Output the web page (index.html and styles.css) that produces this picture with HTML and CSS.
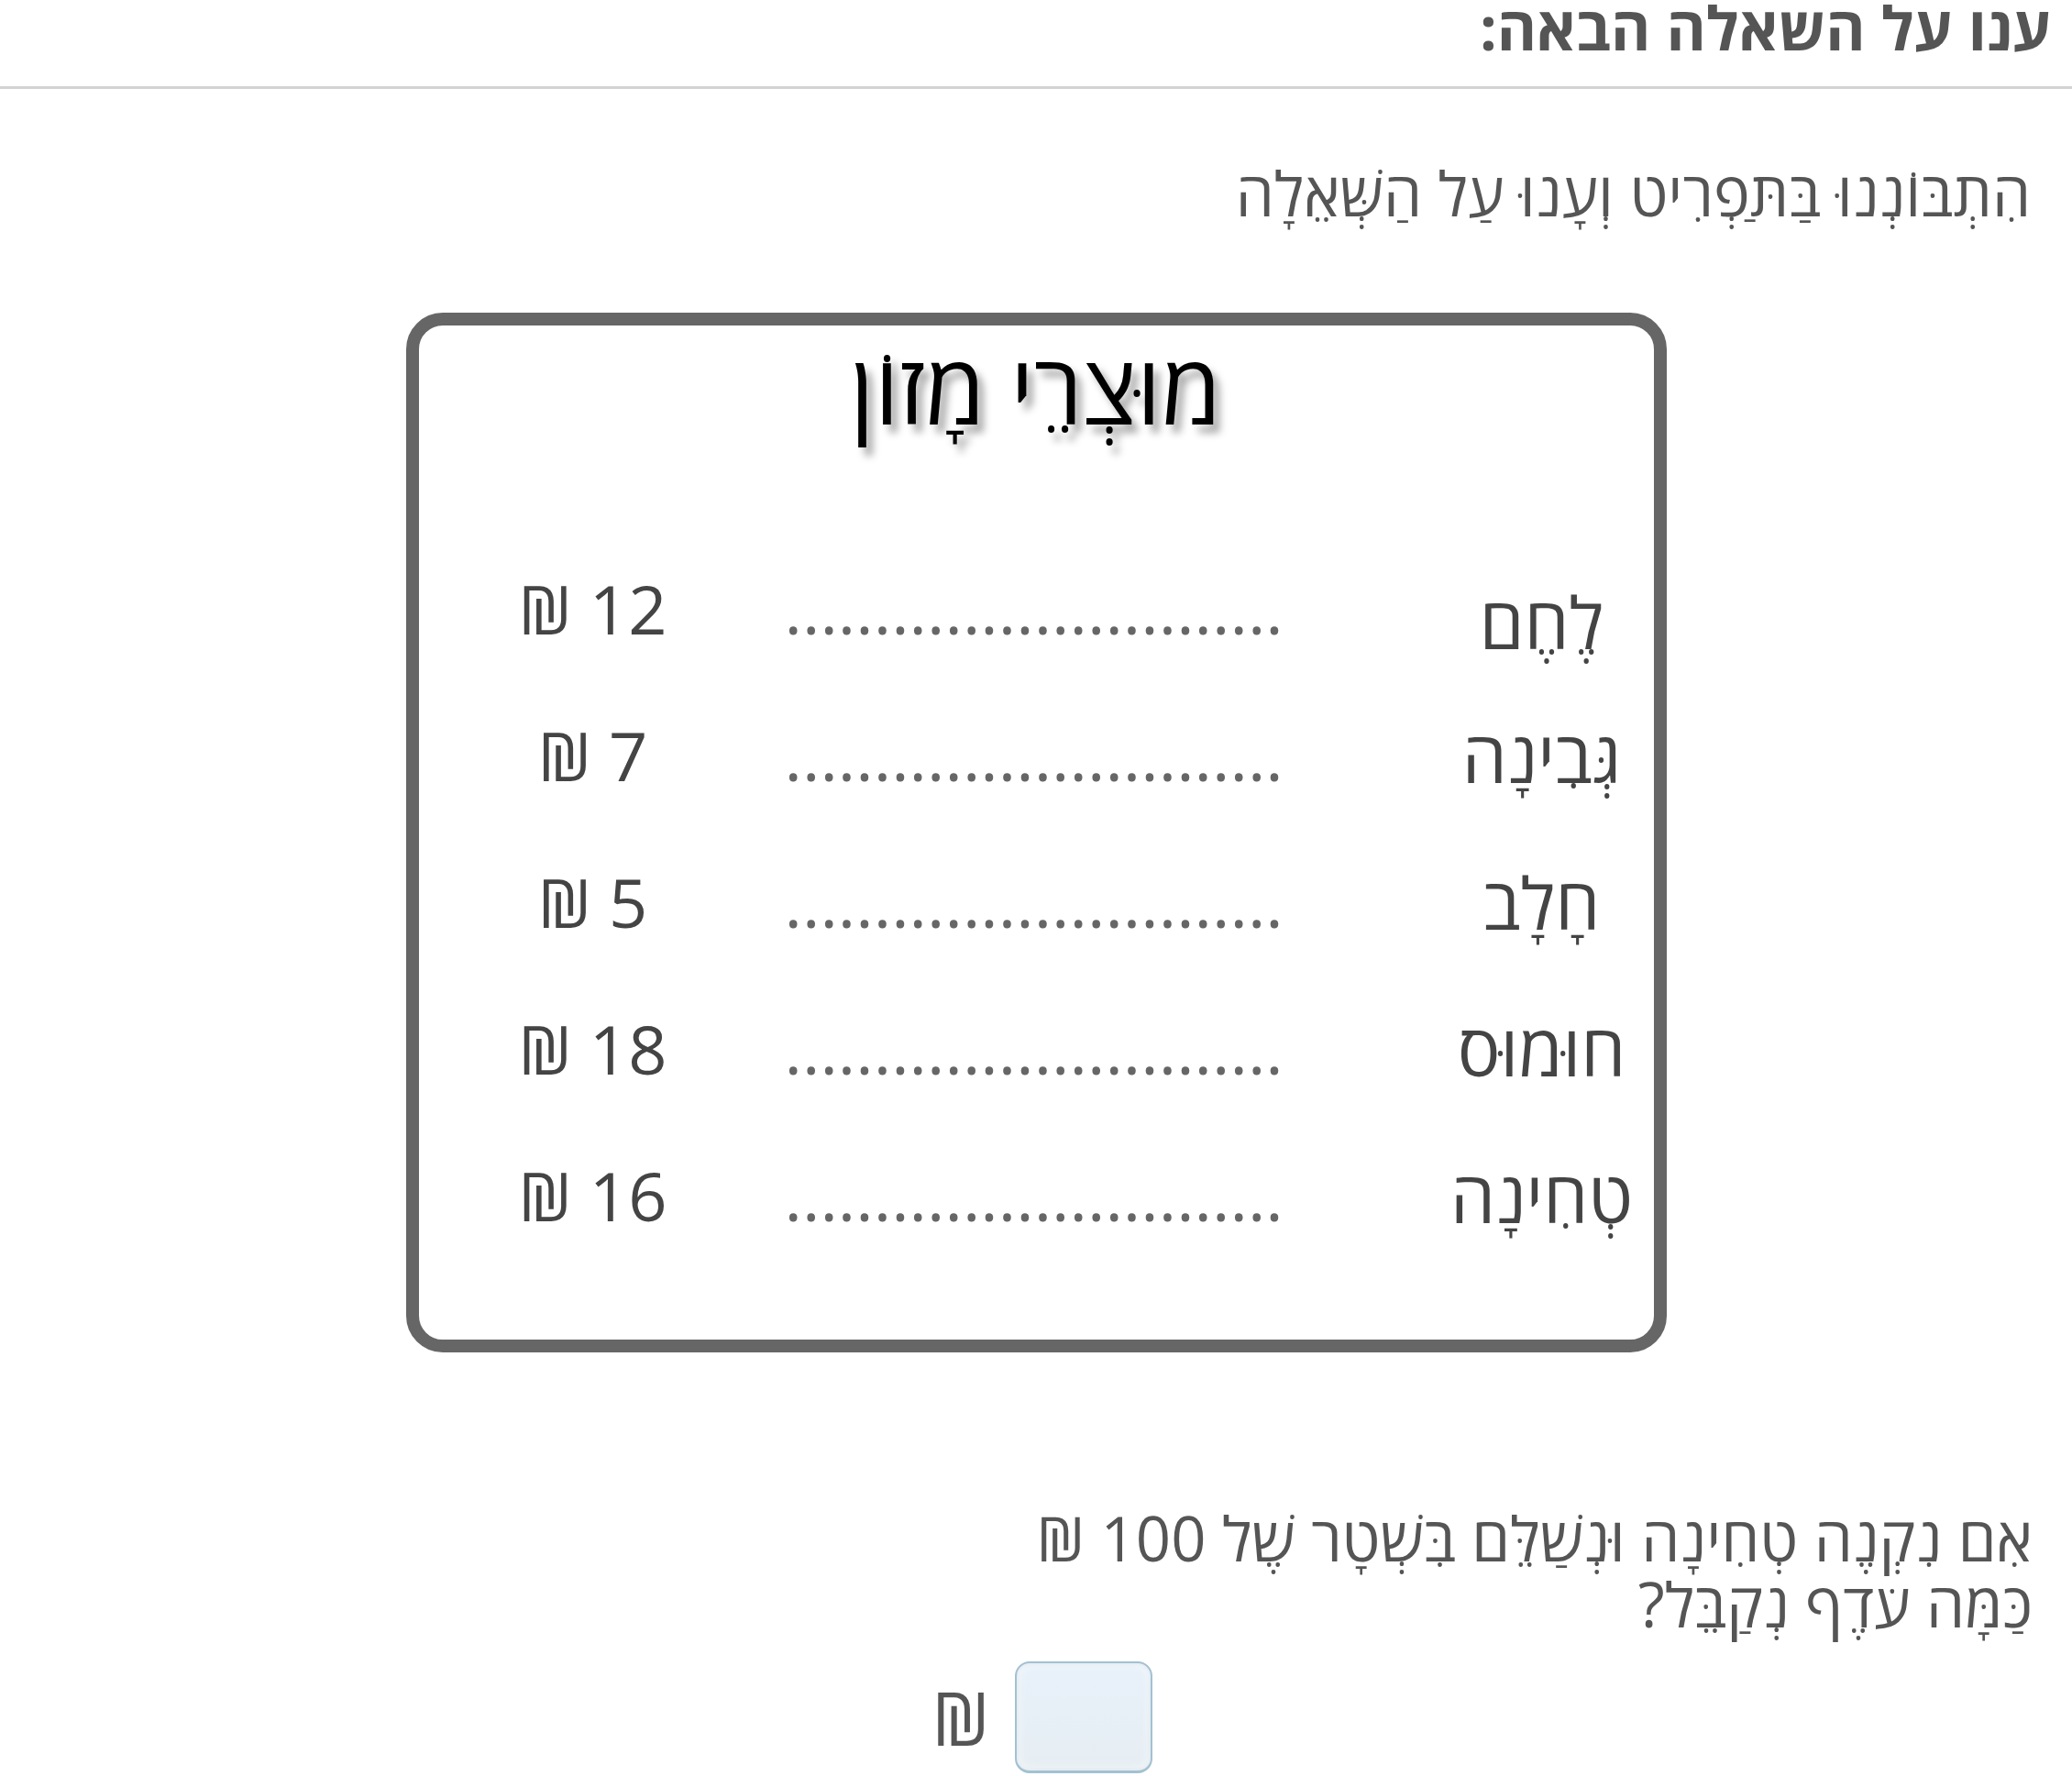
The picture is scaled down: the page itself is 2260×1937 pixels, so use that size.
FILE: index.html
```html
<!DOCTYPE html>
<html lang="he" dir="rtl">
<head>
<meta charset="utf-8">
<title>ענו על השאלה הבאה</title>
<link rel="stylesheet" href="styles.css">
</head>
<body>
<header class="page-head">ענו על השאלה הבאה:</header>
<p class="intro">הִתְבּוֹנְנוּ בַּתַּפְרִיט וְעָנוּ עַל הַשְּׁאֵלָה</p>
<section class="menu">
  <h2 class="menu-title">מוּצְרֵי מָזוֹן</h2>
  <div class="menu-list">
    <div class="item-name item-name-low">לֶחֶם</div>
    <div class="item-dots">............................</div>
    <div class="item-price">12 ₪</div>

    <div class="item-name">גְּבִינָה</div>
    <div class="item-dots">............................</div>
    <div class="item-price">7 ₪</div>

    <div class="item-name">חָלָב</div>
    <div class="item-dots">............................</div>
    <div class="item-price">5 ₪</div>

    <div class="item-name">חוּמוּס</div>
    <div class="item-dots">............................</div>
    <div class="item-price">18 ₪</div>

    <div class="item-name">טְחִינָה</div>
    <div class="item-dots">............................</div>
    <div class="item-price">16 ₪</div>
  </div>
</section>
<p class="question">אִם נִקְנֶה טְחִינָה וּנְשַׁלֵּם בִּשְׁטָר שֶׁל 100 ₪<br>כַּמָּה עֹדֶף נְקַבֵּל?</p>
<div class="answer">
  <div class="answer-box"></div>
  <span class="answer-unit">₪</span>
</div>
</body>
</html>
```
FILE: styles.css
```css
html, body {
  margin: 0;
  padding: 0;
  background: #fff;
}
body {
  direction: rtl;
  font-family: "Open Sans", "DejaVu Sans", sans-serif;
  color: #555;
  overflow: hidden;
}
.page-head {
  font-size: 66px;
  line-height: 68px;
  font-weight: 700;
  color: #555;
  margin-top: -5px;
  padding: 0 23px 31px 0;
  border-bottom: 3px solid #d3d3d3;
}
.intro {
  margin: 73px 0 0 0;
  padding-right: 45px;
  font-size: 67px;
  line-height: 80px;
}
.menu {
  width: 1375px;
  height: 1134px;
  box-sizing: border-box;
  margin: 91px auto 0 auto;
  border: 14px solid #666;
  border-radius: 40px;
  padding-top: 12px;
}
.menu-title {
  margin: 0;
  text-align: center;
  font-size: 106px;
  line-height: 110px;
  font-weight: 400;
  color: #000;
  text-shadow: 7px 9px 9px rgba(0, 0, 0, 0.35);
}
.menu-list {
  margin-top: 107px;
  display: grid;
  grid-template-columns: 236px 1fr 380px;
  grid-auto-rows: 160px;
  padding-right: 4px;
  font-size: 74px;
  line-height: 160px;
  color: #444;
}
.item-name {
  text-align: center;
  font-size: 78px;
}
.item-name-low {
  padding-top: 14px;
}
.item-dots {
  text-align: left;
  padding-left: 19px;
  color: #666;
}
.item-price {
  text-align: center;
}
.question {
  margin: 166px 0 0 0;
  padding-right: 43px;
  font-size: 67px;
  line-height: 72px;
}
.answer {
  margin-top: 27px;
  display: flex;
  justify-content: center;
  align-items: center;
  gap: 28px;
  margin-left: 14px;
}
.answer-box {
  width: 150px;
  height: 122px;
  box-sizing: border-box;
  border: 2px solid #a3c1d2;
  border-bottom-width: 3px;
  border-radius: 16px;
  background: linear-gradient(#e8f1fa, #e6eef3);
  box-shadow: inset 0 0 12px rgba(255, 255, 255, 0.9), inset 0 0 4px rgba(90, 130, 150, 0.35);
}
.answer-unit {
  font-size: 80px;
  line-height: 80px;
  color: #555;
}
```
